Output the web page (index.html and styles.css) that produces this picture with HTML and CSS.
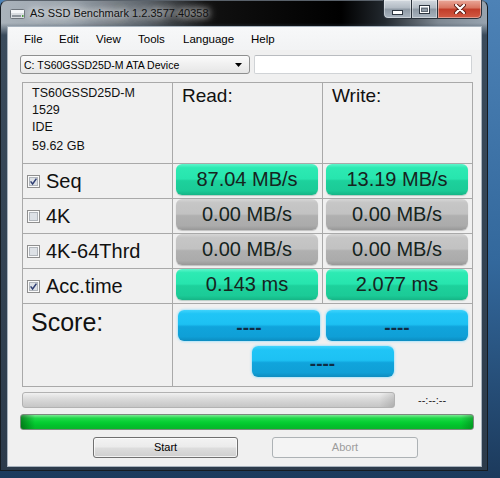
FILE: index.html
```html
<!DOCTYPE html>
<html>
<head>
<meta charset="utf-8">
<title>AS SSD Benchmark</title>
<link rel="stylesheet" href="styles.css">
</head>
<body>
<div class="window">
  <div class="titlebar">
    <div class="title">
      <svg class="app-icon" width="15" height="13" viewBox="0 0 15 13">
        <rect x="0.5" y="2.5" width="14" height="9" rx="1" fill="#d9dde1" stroke="#6d747b"/>
        <rect x="1" y="3" width="13" height="3" fill="#f4f6f8"/>
        <rect x="2" y="8" width="9" height="2" fill="#8d949b"/>
        <rect x="12" y="8" width="1.5" height="2" fill="#4c9b3c"/>
      </svg>
      <span class="title-text">AS SSD Benchmark 1.2.3577.40358</span>
    </div>
    <div class="caption">
      <div class="cb cb-min">
        <svg width="11" height="5" viewBox="0 0 11 5"><rect x="0.5" y="0.5" width="10" height="4" fill="#fff" stroke="#2d3640"/></svg>
      </div>
      <div class="cb cb-max">
        <svg width="11" height="9" viewBox="0 0 11 9"><rect x="0.5" y="0.5" width="10" height="8" fill="none" stroke="#2d3640"/><rect x="1.5" y="1.5" width="8" height="6" fill="none" stroke="#fff"/><rect x="2.5" y="3.5" width="6" height="3" fill="none" stroke="#2d3640" stroke-opacity="0.5"/></svg>
      </div>
      <div class="cb cb-close">
        <svg width="12" height="10" viewBox="0 0 12 10"><path d="M2 1 L10 9 M10 1 L2 9" stroke="#5a1a12" stroke-width="4" stroke-linecap="round"/><path d="M2 1 L10 9 M10 1 L2 9" stroke="#fff" stroke-width="2.2" stroke-linecap="round"/></svg>
      </div>
    </div>
  </div>

  <div class="client">
    <div class="menubar">
      <span>File</span>
      <span>Edit</span>
      <span>View</span>
      <span>Tools</span>
      <span>Language</span>
      <span>Help</span>
    </div>

    <div class="toolrow">
      <div class="combo">
        <span class="combo-text">C: TS60GSSD25D-M ATA Device</span>
        <svg class="combo-arrow" width="7" height="4" viewBox="0 0 7 4"><path d="M0 0 H7 L3.5 4 Z" fill="#000"/></svg>
      </div>
      <div class="textbox"></div>
    </div>

    <div class="grid">
      <div class="cell info">
        <div>TS60GSSD25D-M</div>
        <div>1529</div>
        <div>IDE</div>
        <div class="info-last">59.62 GB</div>
      </div>
      <div class="cell head">Read:</div>
      <div class="cell head">Write:</div>

      <div class="cell label">
        <svg class="check" width="13" height="13" viewBox="0 0 13 13"><rect x="0.5" y="0.5" width="12" height="12" fill="#fbfbfb" stroke="#8f8f8f"/><rect x="2.5" y="2.5" width="8" height="8" fill="#dde1e6" stroke="#b0b5bb"/><path d="M3.6 6.4 L5.6 8.9 L9.4 3.6" fill="none" stroke="#2f3e72" stroke-width="1.5"/></svg>
        <span>Seq</span>
      </div>
      <div class="cell val"><div class="pill green">87.04 MB/s</div></div>
      <div class="cell val"><div class="pill green">13.19 MB/s</div></div>

      <div class="cell label">
        <svg class="check" width="13" height="13" viewBox="0 0 13 13"><rect x="0.5" y="0.5" width="12" height="12" fill="#fbfbfb" stroke="#8f8f8f"/><rect x="2.5" y="2.5" width="8" height="8" fill="#dde1e6" stroke="#b0b5bb"/></svg>
        <span>4K</span>
      </div>
      <div class="cell val"><div class="pill gray">0.00 MB/s</div></div>
      <div class="cell val"><div class="pill gray">0.00 MB/s</div></div>

      <div class="cell label">
        <svg class="check" width="13" height="13" viewBox="0 0 13 13"><rect x="0.5" y="0.5" width="12" height="12" fill="#fbfbfb" stroke="#8f8f8f"/><rect x="2.5" y="2.5" width="8" height="8" fill="#dde1e6" stroke="#b0b5bb"/></svg>
        <span>4K-64Thrd</span>
      </div>
      <div class="cell val"><div class="pill gray">0.00 MB/s</div></div>
      <div class="cell val"><div class="pill gray">0.00 MB/s</div></div>

      <div class="cell label">
        <svg class="check" width="13" height="13" viewBox="0 0 13 13"><rect x="0.5" y="0.5" width="12" height="12" fill="#fbfbfb" stroke="#8f8f8f"/><rect x="2.5" y="2.5" width="8" height="8" fill="#dde1e6" stroke="#b0b5bb"/><path d="M3.6 6.4 L5.6 8.9 L9.4 3.6" fill="none" stroke="#2f3e72" stroke-width="1.5"/></svg>
        <span>Acc.time</span>
      </div>
      <div class="cell val"><div class="pill green">0.143 ms</div></div>
      <div class="cell val"><div class="pill green">2.077 ms</div></div>

      <div class="cell score-label">Score:</div>
      <div class="cell score-vals">
        <div class="score-row">
          <div class="pill blue">----</div>
          <div class="pill blue">----</div>
        </div>
        <div class="score-row score-total">
          <div class="pill blue">----</div>
        </div>
      </div>
    </div>

    <div class="progress-row">
      <div class="bar bar-gray"></div>
      <span class="time">--:--:--</span>
    </div>
    <div class="bar bar-green"></div>

    <div class="buttons">
      <div class="btn">Start</div>
      <div class="btn btn-disabled">Abort</div>
    </div>
  </div>
</div>
</body>
</html>
```

FILE: styles.css
```css
html, body {
  margin: 0;
  padding: 0;
}

body {
  width: 500px;
  height: 478px;
  overflow: hidden;
  background: linear-gradient(180deg, #4d82b6 0%, #33689c 55%, #1c3a5c 100%);
  font-family: "Liberation Sans", Arial, sans-serif;
}

.window {
  width: 488px;
  height: 471px;
  box-sizing: border-box;
  border: 1px solid #161c22;
  border-top-color: #59616a;
  border-radius: 7px 7px 0 0;
  padding: 0 6px 4px 7px;
  display: flex;
  flex-direction: column;
  background:
    linear-gradient(180deg, rgba(50, 64, 78, 0) 0, rgba(50, 64, 78, 0) 22px, #3a4b5c 34px, #2c3b4b 100%),
    linear-gradient(90deg, #aab3bb 0%, #9aa3ac 14%, #5a6168 30%, #111 42%, #000 70%, #23292f 79%, #7e8892 90%, #97a3af 100%);
}

/* ---------- title bar ---------- */
.titlebar {
  height: 26px;
  display: flex;
  justify-content: space-between;
  align-items: flex-start;
}

.title {
  display: flex;
  align-items: center;
  height: 24px;
  padding-left: 2px;
  gap: 5px;
}

.app-icon {
  display: block;
}

.title-text {
  font-size: 11px;
  color: #111;
  text-shadow: 0 0 6px rgba(255, 255, 255, 0.95), 0 0 10px rgba(255, 255, 255, 0.8), 0 0 14px rgba(255, 255, 255, 0.6);
}

.caption {
  display: flex;
  margin-top: -1px;
  margin-right: -1px;
}

.cb {
  height: 19px;
  box-sizing: border-box;
  border: 1px solid #2b333c;
  border-top: none;
  display: flex;
  align-items: center;
  justify-content: center;
  box-shadow: inset 0 0 0 1px rgba(255, 255, 255, 0.4);
  background: linear-gradient(180deg, #d3d9df 0%, #b1bac3 45%, #8d98a3 50%, #a9b4bf 100%);
}

.cb-min {
  width: 28px;
  border-right: none;
  border-radius: 0 0 0 5px;
  align-items: flex-end;
  padding-bottom: 3px;
}

.cb-max {
  width: 26px;
  border-right: none;
}

.cb-close {
  width: 45px;
  border-radius: 0 0 5px 0;
  background: linear-gradient(180deg, #eaa89a 0%, #d8735f 45%, #c13c29 50%, #d25a44 100%);
}

/* ---------- client ---------- */
.client {
  flex: 1;
  background: #f0f0f0;
  box-shadow: 0 0 0 1px #a7b2bd;
  display: flex;
  flex-direction: column;
}

.menubar {
  height: 23px;
  box-sizing: border-box;
  padding: 4px 0 0 16px;
  display: grid;
  grid-template-columns: 35px 37px 42px 45px 68px auto;
  font-size: 11.5px;
  line-height: 17px;
  color: #000;
  background: linear-gradient(180deg, #f7f8f9 0%, #f2f3f4 100%);
}

.toolrow {
  display: flex;
  margin: 5px 0 0 12px;
  gap: 4px;
}

.combo {
  width: 230px;
  height: 19px;
  box-sizing: border-box;
  border: 1px solid #8e8f8f;
  border-radius: 3px;
  background: linear-gradient(180deg, #fbfbfb 0%, #f0f0f0 50%, #e6e6e6 100%);
  display: flex;
  align-items: center;
  justify-content: space-between;
  padding: 0 7px 0 3px;
}

.combo-text {
  font-size: 10.5px;
  color: #000;
}

.combo-arrow {
  display: block;
}

.textbox {
  width: 218px;
  height: 19px;
  box-sizing: border-box;
  border: 1px solid #d0d3d6;
  border-top-color: #b9bcc0;
  border-radius: 2px;
  background: #fff;
}

/* ---------- results grid ---------- */
.grid {
  margin: 8px 0 0 14px;
  width: 451px;
  box-sizing: border-box;
  display: grid;
  grid-template-columns: repeat(3, 150px);
  grid-template-rows: 81px repeat(4, 35px) 83px;
  border-left: 1px solid #a9a9a9;
  border-top: 1px solid #a9a9a9;
}

.cell {
  box-sizing: border-box;
  border-right: 1px solid #a9a9a9;
  border-bottom: 1px solid #a9a9a9;
  min-width: 0;
}

.info {
  padding: 2px 0 0 9px;
  font-size: 12.5px;
  line-height: 17px;
  color: #111;
}

.info-last {
  margin-top: 2px;
}

.head {
  padding: 2px 0 0 9px;
  font-size: 19px;
  color: #111;
}

.label {
  display: flex;
  align-items: center;
  padding-left: 4px;
  gap: 6px;
  font-size: 20px;
  color: #111;
}

.check {
  display: block;
  flex: none;
}

.val {
  padding-left: 3px;
}

.pill {
  width: 142px;
  height: 31px;
  box-sizing: border-box;
  border-radius: 6px;
  text-align: center;
  font-size: 20px;
  line-height: 31px;
  color: #16241e;
}

.green {
  background: linear-gradient(180deg, #5ef5cb 0%, #2deab3 12%, #27e5ae 48%, #1dd19c 54%, #1bcb97 86%, #15b586 100%);
  box-shadow: 0 1px 1px rgba(0, 90, 60, 0.25);
}

.gray {
  background: linear-gradient(180deg, #d6d6d6 0%, #c6c6c6 12%, #c2c2c2 48%, #b0b0b0 54%, #ababab 86%, #989898 100%);
  box-shadow: 0 1px 1px rgba(0, 0, 0, 0.2);
}

.score-label {
  padding: 4px 0 0 8px;
  font-size: 25px;
  color: #111;
}

.score-vals {
  grid-column: span 2;
  padding-top: 6px;
  display: flex;
  flex-direction: column;
  gap: 5px;
}

.score-row {
  display: flex;
  gap: 6px;
  padding-left: 5px;
}

.score-total {
  justify-content: center;
  padding-left: 0;
}

.blue {
  padding-top: 5px;
  line-height: 26px;
  font-size: 19px;
  font-weight: bold;
  color: #0e2c44;
  background: linear-gradient(180deg, #40d3fb 0%, #20c5f6 12%, #1dc1f3 46%, #10a4dc 54%, #0f9fd6 86%, #0c8cc0 100%);
  box-shadow: 0 0 2px 1px rgba(160, 225, 250, 0.8);
}

/* ---------- progress ---------- */
.progress-row {
  display: flex;
  align-items: center;
  margin: 5px 0 0 14px;
}

.bar {
  height: 16px;
  box-sizing: border-box;
  border-radius: 3px;
}

.bar-gray {
  width: 373px;
  border: 1px solid #b2b2b2;
  background:
    linear-gradient(90deg, rgba(0, 0, 0, 0) 0, rgba(0, 0, 0, 0) 96%, rgba(0, 0, 0, 0.12) 100%),
    linear-gradient(180deg, #f1f1f1 0%, #dedede 35%, #d2d2d2 65%, #c6c6c6 100%);
}

.time {
  margin-left: 23px;
  font-size: 11px;
  color: #222;
}

.bar-green {
  width: 454px;
  margin: 6px 0 0 12px;
  border: 1px solid #7c8a7e;
  background:
    linear-gradient(90deg, rgba(0, 70, 10, 0.55) 0, rgba(0, 70, 10, 0) 14px, rgba(0, 70, 10, 0) 440px, rgba(0, 70, 10, 0.3) 100%),
    linear-gradient(180deg, #7ceb95 0%, #22d84a 22%, #06cf33 50%, #02c22c 75%, #08b52a 100%);
}

/* ---------- buttons ---------- */
.buttons {
  display: flex;
  margin: 7px 0 0 85px;
  gap: 34px;
}

.btn {
  width: 145px;
  height: 21px;
  box-sizing: border-box;
  border: 1px solid #707070;
  border-radius: 3px;
  background: linear-gradient(180deg, #f3f3f3 0%, #ebebeb 48%, #dddddd 52%, #cfcfcf 100%);
  box-shadow: inset 0 0 0 1px rgba(255, 255, 255, 0.7);
  font-size: 11px;
  line-height: 19px;
  text-align: center;
  color: #000;
}

.btn-disabled {
  width: 146px;
  border-color: #adb2b5;
  background: #f4f4f4;
  box-shadow: none;
  color: #9c9c9c;
}
```
